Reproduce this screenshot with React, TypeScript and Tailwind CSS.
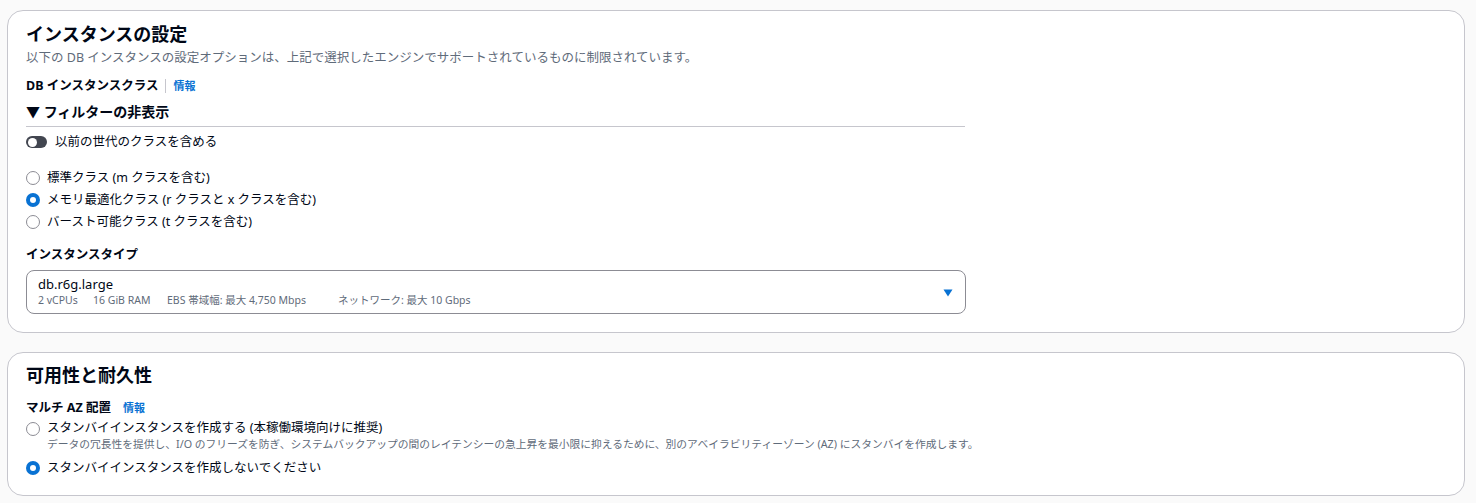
import React from 'react';

const font = { fontFamily: '"Noto Sans", "Noto Sans CJK JP", sans-serif' };

const Radio: React.FC<{ checked?: boolean }> = ({ checked }) =>
  checked ? (
    <span className="w-[14px] h-[14px] rounded-full bg-[#0972d3] flex items-center justify-center flex-shrink-0">
      <span className="w-[6px] h-[6px] rounded-full bg-white" />
    </span>
  ) : (
    <span className="block w-[14px] h-[14px] rounded-full border-[1.5px] border-[#8c8c94] bg-white flex-shrink-0" />
  );

const Info: React.FC = () => (
  <span className="text-[#0972d3] text-[11px] font-bold">情報</span>
);

export default function App() {
  return (
    <div className="min-h-[503px] bg-[#fafafa] px-[7px] pt-[10px] text-[#000716]" style={font}>
      <div className="w-[1458px] h-[323px] bg-white border border-[#c6c6cd] rounded-[16px] px-[18px] pt-[10px]">
        <h2 className="text-[18px] font-bold leading-[26px]">インスタンスの設定</h2>
        <p className="text-[12.5px] text-[#5f6b7a] leading-[18px] mt-[2px]">
          以下の DB インスタンスの設定オプションは、上記で選択したエンジンでサポートされているものに制限されています。
        </p>
        <div className="flex items-center mt-[10px] h-[18px]">
          <span className="text-[12.5px] font-bold">DB インスタンスクラス</span>
          <span className="w-px h-[14px] bg-[#c6c6cd] mx-[7px]" />
          <Info />
        </div>
        <div className="w-[939px] border-b border-[#c6c6cd] mt-[4px] pb-[3px]">
          <span className="text-[14px] font-bold leading-[20px]">▼ フィルターの非表示</span>
        </div>
        <div className="flex items-center gap-[8px] mt-[5px] h-[20px]">
          <span className="w-[21px] h-[12px] rounded-full bg-[#424650] flex items-center pl-[2px]">
            <span className="w-[9px] h-[9px] rounded-full bg-white" />
          </span>
          <span className="text-[12.5px]">以前の世代のクラスを含める</span>
        </div>
        <div className="flex flex-col mt-[15px]">
          {[
            { label: '標準クラス (m クラスを含む)', checked: false },
            { label: 'メモリ最適化クラス (r クラスと x クラスを含む)', checked: true },
            { label: 'バースト可能クラス (t クラスを含む)', checked: false },
          ].map((r) => (
            <div key={r.label} className="flex items-center gap-[7px] h-[22px]">
              <Radio checked={r.checked} />
              <span className="text-[12.5px]">{r.label}</span>
            </div>
          ))}
        </div>
        <div className="text-[12.5px] font-bold mt-[13px] leading-[18px]">インスタンスタイプ</div>
        <div className="w-[940px] h-[44px] mt-[6px] border border-[#8c8c94] rounded-[8px] flex items-center pl-[11px] pr-[12px]">
          <div className="flex-1 flex flex-col">
            <span className="text-[13px] leading-[17px]">db.r6g.large</span>
            <div className="flex text-[10.5px] text-[#5f6b7a] leading-[15px]">
              <span className="w-[55px]">2 vCPUs</span>
              <span className="w-[74px]">16 GiB RAM</span>
              <span className="w-[171px]">EBS 帯域幅: 最大 4,750 Mbps</span>
              <span>ネットワーク: 最大 10 Gbps</span>
            </div>
          </div>
          <svg width="10" height="8" viewBox="0 0 10 8" className="mt-[1px]">
            <path d="M0.5 0.5 L9.5 0.5 L5 7.5 Z" fill="#0972d3" />
          </svg>
        </div>
      </div>

      <div className="w-[1458px] h-[144px] mt-[19px] bg-white border border-[#c6c6cd] rounded-[16px] px-[18px] pt-[9px]">
        <h2 className="text-[18px] font-bold leading-[26px]">可用性と耐久性</h2>
        <div className="flex items-center gap-[12px] mt-[11px] h-[18px]">
          <span className="text-[12.5px] font-bold">マルチ AZ 配置</span>
          <Info />
        </div>
        <div className="flex gap-[7px] mt-[2px]">
          <span className="flex mt-[3px]"><Radio /></span>
          <div className="flex flex-col">
            <span className="text-[12.5px] leading-[18px]">スタンバイインスタンスを作成する (本稼働環境向けに推奨)</span>
            <span className="text-[10.75px] text-[#5f6b7a] leading-[14px]">
              データの冗長性を提供し、I/O のフリーズを防ぎ、システムバックアップの間のレイテンシーの急上昇を最小限に抑えるために、別のアベイラビリティーゾーン (AZ) にスタンバイを作成します。
            </span>
          </div>
        </div>
        <div className="flex items-center gap-[7px] mt-[7px] h-[20px]">
          <Radio checked />
          <span className="text-[12.5px]">スタンバイインスタンスを作成しないでください</span>
        </div>
      </div>
    </div>
  );
}
